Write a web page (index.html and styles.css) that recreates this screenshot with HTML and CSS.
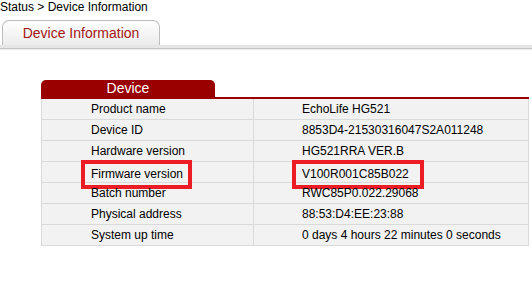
FILE: index.html
```html
<!doctype html>
<html>

<head>
	<title>Device Information</title>
	<link rel="stylesheet" href="styles.css">
</head>

<body>
	<div id='crumb'>Status &gt; Device Information</div>
	<div id='tab-bar'>
		<div class='page-tab'>Device Information</div>
	</div>
	<div id='tab-line'></div>
	<div id='content'>
		<div class='panel-head'>
			<div class='panel-tab'>Device</div>
		</div>
		<table class='info-table'>
			<tr><td class='label'>Product name</td><td class='value'>EchoLife HG521</td></tr>
			<tr><td class='label'>Device ID</td><td class='value'>8853D4-21530316047S2A011248</td></tr>
			<tr><td class='label'>Hardware version</td><td class='value'>HG521RRA VER.B</td></tr>
			<tr><td class='label'><span class='mark mark-left'>Firmware version</span></td><td class='value'><span class='mark mark-right'>V100R001C85B022</span></td></tr>
			<tr><td class='label'>Batch number</td><td class='value'>RWC85P0.022.29068</td></tr>
			<tr><td class='label'>Physical address</td><td class='value'>88:53:D4:EE:23:88</td></tr>
			<tr><td class='label'>System up time</td><td class='value'>0 days 4 hours 22 minutes 0 seconds</td></tr>
		</table>
	</div>
</body>

</html>
```

FILE: styles.css
```css
		html, body {
			margin: 0;
			padding: 0;
			background-color: #fff;
			font-family: 'Liberation Sans', Arial, sans-serif;
			font-size: 12px;
			color: #000;
		}
		#crumb {
			height: 15px;
			line-height: 15px;
		}
		#tab-bar {
			display: flex;
			padding: 5px 0 0 2px;
			height: 25px;
		}
		.page-tab {
			width: 156px;
			height: 24px;
			line-height: 25px;
			border: 1px solid #bdbdbd;
			border-bottom: none;
			border-radius: 7px 7px 0 0;
			background: linear-gradient(#ffffff, #ececec);
			color: #a51616;
			font-size: 14px;
			text-align: center;
		}
		#tab-line {
			height: 5px;
			background: linear-gradient(#e6e6e6 0, #e6e6e6 3px, #c6c6c6 3px, #c6c6c6 4px, #eeeeee 4px);
		}
		#content {
			padding: 30px 3px 0 41px;
		}
		.panel-head {
			display: flex;
			border-bottom: 2px solid #990000;
		}
		.panel-tab {
			width: 174px;
			height: 17px;
			line-height: 17px;
			background-color: #990000;
			border-radius: 5px 5px 0 0;
			color: #fff;
			font-size: 14px;
			text-align: center;
		}
		.info-table {
			width: 100%;
			border-collapse: collapse;
			background-color: #f2f2f2;
		}
		.info-table td {
			height: 20px;
			padding: 0;
			border: 1px solid #dadada;
			border-top: none;
			line-height: 14px;
			white-space: nowrap;
		}
		.info-table .label {
			width: 162px;
			padding-left: 49px;
		}
		.info-table .value {
			padding-left: 48px;
		}
		.mark {
			display: inline-block;
			border: 4px solid #ec1c24;
			padding: 3px 5px 4px 6px;
			margin: -3px -9px -12px -10px;
		}
		.mark-right {
			padding-right: 11px;
			margin-right: -15px;
		}
```
